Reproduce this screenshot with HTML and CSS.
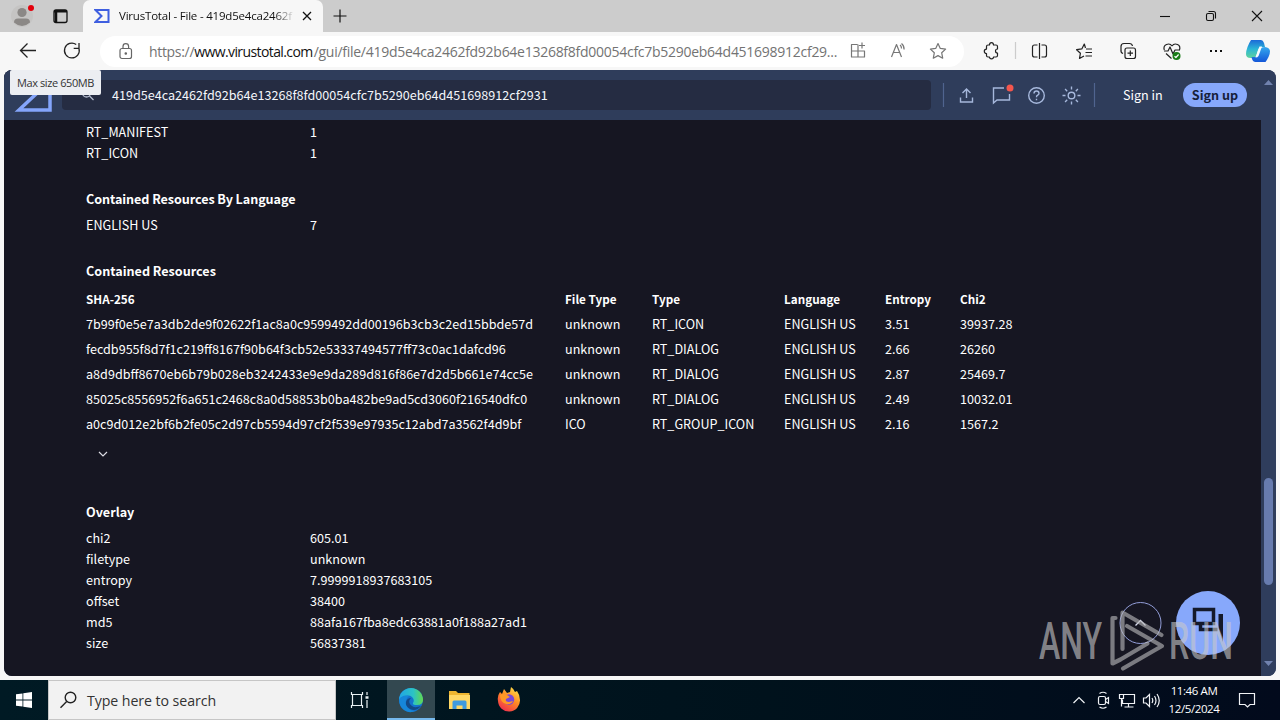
FILE: index.html
```html
<!DOCTYPE html>
<html lang="en">
<head>
<meta charset="utf-8">
<title>VirusTotal - File</title>
<link rel="stylesheet" href="styles.css">
</head>
<body>
<div class="screen">
  <div class="tabbar">
    <svg class="tab-left" width="83" height="32" viewBox="0 0 83 32">
      <circle cx="22" cy="16" r="11" fill="#c5c4c3"/>
      <circle cx="22" cy="12.5" r="4.6" fill="#8b8886"/>
      <path d="M14 22.500q0-4 4-4h8q4 0 4 4q-8 7-16 0z" fill="#8b8886"/>
      <circle cx="31" cy="8" r="3" fill="#e3000b"/>
      <rect x="54" y="10" width="13" height="12.500" rx="2" fill="none" stroke="#111" stroke-width="1.300"/>
      <path d="M54 11.200h13M56 12v10" stroke="#111" stroke-width="2.500"/>
    </svg>
    <div class="tab">
      <svg width="16" height="14" viewBox="0 0 16 14"><path d="M1.500 1h13v12h-13l6-6z" fill="none" stroke="#3f5fe0" stroke-width="2"/></svg>
      <span class="tab-title">VirusTotal - File - 419d5e4ca2462f</span>
      <svg width="10" height="10" viewBox="0 0 10 10"><path d="M1 1l8 8M9 1l-8 8" stroke="#111" stroke-width="1.300"/></svg>
    </div>
    <svg class="newtab" width="14" height="14" viewBox="0 0 14 14"><path d="M7 .5v13M.5 7h13" stroke="#111" stroke-width="1.200"/></svg>
    <svg class="winctl" width="110" height="32" viewBox="0 0 110 32" fill="none" stroke="#111" stroke-width="1.100">
      <path d="M9 16.500h10"/>
      <rect x="55.500" y="13.500" width="7" height="7" rx="1.500"/><path d="M57.500 11.500h5q2 0 2 2v5"/>
      <path d="M101 11l10 10M111 11l-10 10"/>
    </svg>
  </div>

  <div class="toolbar">
    <svg class="nav" width="100" height="38" viewBox="0 32 100 38" fill="none" stroke="#222" stroke-width="1.300">
      <path d="M36 50.500H20.500M27.500 43.500l-7 7 7 7"/>
      <path d="M79 48.500a7.400 7.400 0 1 1-2.800-4M79 43v5.300h-5.300"/>
    </svg>
    <div class="address">
      <svg class="lock" width="14" height="17" viewBox="0 0 14 17" fill="none" stroke="#666" stroke-width="1.200"><rect x="1" y="5.500" width="11.500" height="10" rx="2"/><path d="M4 5.500V3.500a2.800 2.800 0 0 1 5.600 0v2"/><circle cx="6.800" cy="10.500" r=".7" fill="#666"/></svg>
      <span class="url"><span class="u1">https://</span><span class="u2">www.virustotal.com</span><span class="u3">/gui/file/419d5e4ca2462fd92b64e13268f8fd00054cfc7b5290eb64d451698912cf29...</span></span>
    </div>
    <svg class="tools" width="436" height="38" viewBox="844 32 436 38" fill="none" stroke="#222" stroke-width="1.200" stroke-linejoin="round">
      <g stroke="#767676">
        <path d="M857.500 44.500h-6v12.500h13v-6h-13M858 44.500V57M862 42.500v6M859 45.500h6"/>
        <path d="M891.500 57l5-12.500 5 12.500M893.500 52.500h6.500M900 45q1.500 1 1.500 3.500M901.500 43.500q2.700 2 2.600 6"/>
        <path d="M938 43.500l2.300 4.900 5.300.7-3.900 3.700 1 5.400-4.700-2.600-4.700 2.600 1-5.400-3.900-3.700 5.300-.7z"/>
      </g>
      <path d="M986.500 46.500q0-1.500 1.500-1.500h1.500q0-2.300 2-2.300t2 2.300h2.500q1.500 0 1.500 1.500v2.500q-2 0-2 2t2 2v2.500q0 1.500-1.500 1.500h-2.500q0 1.800-2 1.800t-2-1.800h-1.500q-1.500 0-1.500-1.500v-2q-2.200 0-2.200-2.200t2.200-2.200z"/>
      <path d="M1015.500 42v17" stroke="#ccc"/>
      <path d="M1037.500 45h-3q-2 0-2 2v8q0 2 2 2h3M1041.500 45h3q2 0 2 2v8q0 2-2 2h-3M1039.500 43v16"/>
      <path d="M1085.500 48l-1.200-4-2.500 4.900-5.200.8 3.800 3.600-.9 5.100 4.500-2.500M1086 49h6M1085.500 52.500h6.500M1085.500 56h6.500"/>
      <rect x="1125" y="48" width="10.500" height="10.500" rx="2"/><path d="M1130.300 50.500v5.500M1127.500 53.200h5.500M1123 53.500q-2.500-1-2-4v-3q0-3 3-3h5.500q2.500 0 3 2.500"/>
      <path d="M1172 46q-2-3-5.500-1.500t-2.200 5.500M1172 46q2-3 5.500-1.500t1.800 6M1164 51h4l2-4 3 7 2-4h4M1166 53.500l5.500 5"/>
      <circle cx="1176.500" cy="56" r="4" fill="#187c16" stroke="none"/><path d="M1174.500 56.200l1.400 1.300 2.700-3" stroke="#fff"/>
      <path d="M1210 51h2M1215 51h2M1220 51h2" stroke="#111" stroke-width="2"/>
      <defs>
        <linearGradient id="cop1" x1="0" y1="0" x2="0" y2="1"><stop offset="0" stop-color="#1b69d8"/><stop offset=".5" stop-color="#2bb6d6"/><stop offset="1" stop-color="#5fd39c"/></linearGradient>
        <linearGradient id="cop2" x1="0" y1="0" x2="0" y2="1"><stop offset="0" stop-color="#35a8ee"/><stop offset="1" stop-color="#1457d8"/></linearGradient>
      </defs>
      <g stroke="none">
        <path d="M1251 40h10q2 0 3 3l1 4h-4q-2 0-3 3l-1.500 5q-1 3-4 3h-2q-4.500 0-4.500-4 0-3 1.500-7t3.500-7z" fill="url(#cop1)"/>
        <path d="M1265 47q4.500.5 5 4 0 3-1.500 6t-3 5h-10q-2.500 0-3.500-3l-.5-2h3q2.500 0 3.500-3l1.500-4q1-3 5.500-3z" fill="url(#cop2)"/>
        <path d="M1259.500 46.500h2.500l-3.500 9.500q-1 1.500-3 1.500z" fill="#f7fbff"/>
      </g>
    </svg>
  </div>

  <div class="viewport">
    <div class="page">
      <header class="vthead">
        <svg class="vtlogo" width="44" height="50" viewBox="10 70 44 50"><path d="M18 78h32v32H19l16-15z" fill="none" stroke="#84a5fb" stroke-width="3.500"/></svg>
        <div class="search">
          <svg width="14" height="14" viewBox="0 0 14 14" fill="none" stroke="#b5bdd0" stroke-width="1.300"><circle cx="4.500" cy="5" r="4"/><path d="M7.500 8l4 4"/></svg>
          <span class="query">419d5e4ca2462fd92b64e13268f8fd00054cfc7b5290eb64d451698912cf2931</span>
        </div>
        <svg class="headicons" width="166" height="50" viewBox="940 70 166 50" fill="none" stroke="#a6b8dc" stroke-width="1.400">
          <path d="M943.500 83v24M1094.500 83v24" stroke="#50648f" stroke-width="1.200"/>
          <path d="M966.500 98v-8.500M962.500 93l4-4 4 4M960.500 97.500v4.500h12v-4.500"/>
          <path d="M1004 88h-10.500v15l3.500-3h12.500V94"/>
          <circle cx="1010" cy="88" r="3.500" fill="#f4564d" stroke="none"/>
          <circle cx="1036.500" cy="95.500" r="7.800"/><path d="M1034 93.500q0-2.500 2.500-2.500t2.500 2.200q0 1.300-1.300 2t-1.200 2M1036.500 98.700v1.500"/>
          <circle cx="1071.500" cy="95.500" r="3.300"/>
          <path d="M1071.500 86.500v3M1071.500 101.500v3M1062.500 95.500h3M1077.500 95.500h3M1065.100 89.100l2.100 2.100M1075.800 99.800l2.100 2.100M1077.900 89.100l-2.100 2.100M1067.200 99.800l-2.100 2.100"/>
        </svg>
        <span class="signin">Sign in</span>
        <span class="signup">Sign up</span>
      </header>

      <main class="details">
        <div class="pair"><span>RT_MANIFEST</span><span>1</span></div>
        <div class="pair"><span>RT_ICON</span><span>1</span></div>
        <h2 class="tight">Contained Resources By Language</h2>
        <div class="pair"><span>ENGLISH US</span><span>7</span></div>
        <h2>Contained Resources</h2>
        <div class="res rhead"><span>SHA-256</span><span>File Type</span><span>Type</span><span>Language</span><span>Entropy</span><span>Chi2</span></div>
        <div class="res"><span>7b99f0e5e7a3db2de9f02622f1ac8a0c9599492dd00196b3cb3c2ed15bbde57d</span><span>unknown</span><span>RT_ICON</span><span>ENGLISH US</span><span>3.51</span><span>39937.28</span></div>
        <div class="res"><span>fecdb955f8d7f1c219ff8167f90b64f3cb52e53337494577ff73c0ac1dafcd96</span><span>unknown</span><span>RT_DIALOG</span><span>ENGLISH US</span><span>2.66</span><span>26260</span></div>
        <div class="res"><span>a8d9dbff8670eb6b79b028eb3242433e9e9da289d816f86e7d2d5b661e74cc5e</span><span>unknown</span><span>RT_DIALOG</span><span>ENGLISH US</span><span>2.87</span><span>25469.7</span></div>
        <div class="res"><span>85025c8556952f6a651c2468c8a0d58853b0ba482be9ad5cd3060f216540dfc0</span><span>unknown</span><span>RT_DIALOG</span><span>ENGLISH US</span><span>2.49</span><span>10032.01</span></div>
        <div class="res"><span>a0c9d012e2bf6b2fe05c2d97cb5594d97cf2f539e97935c12abd7a3562f4d9bf</span><span>ICO</span><span>RT_GROUP_ICON</span><span>ENGLISH US</span><span>2.16</span><span>1567.2</span></div>
        <div class="more"><svg width="10" height="6" viewBox="0 0 10 6"><path d="M1 1l4 4 4-4" fill="none" stroke="#dcdce4" stroke-width="1.200"/></svg></div>
        <h2>Overlay</h2>
        <div class="pair"><span>chi2</span><span>605.01</span></div>
        <div class="pair"><span>filetype</span><span>unknown</span></div>
        <div class="pair"><span>entropy</span><span>7.9999918937683105</span></div>
        <div class="pair"><span>offset</span><span>38400</span></div>
        <div class="pair"><span>md5</span><span>88afa167fba8edc63881a0f188a27ad1</span></div>
        <div class="pair"><span>size</span><span>56837381</span></div>
      </main>
    </div>
    <svg class="scroll" width="15" height="606" viewBox="0 0 15 606"><path d="M3 15l4.500-5 4.500 5zM3 591l4.500 5 4.500-5z" fill="#7182ae"/><rect x="3" y="408" width="9" height="107" rx="4.500" fill="#677bae"/></svg>
  </div>

  <div class="tooltip">Max size 650MB</div>

  <svg class="overlay" width="220" height="90" viewBox="1030 586 220 90">
    <circle cx="1140.500" cy="623" r="20.500" fill="none" stroke="#929dd8" stroke-width="1"/>
    <path d="M1135.500 625.500l5-5 5 5" fill="none" stroke="#d8dcef" stroke-width="1.300"/>
    <circle cx="1208" cy="623" r="32" fill="#87a8fb"/>
    <path d="M1194.500 609.500h19v14h-19zM1200.500 624v5.500h17" fill="none" stroke="#151a2b" stroke-width="3.500"/>
    <path d="M1218.500 614h4.500v28l-4.500-14z" fill="#151a2b"/>
    <g fill="none" stroke="#b9b9bc" stroke-opacity=".62" stroke-width="4.200" stroke-linejoin="round" stroke-linecap="round">
      <path d="M1115.500 618h-3v45.500l8-4 27-16M1122.500 649v-36.500l39 22.500M1127 626l35 20-39 22.500"/>
    </g>
    <g class="mark">
      <text x="1039" y="659" textLength="63" lengthAdjust="spacingAndGlyphs">ANY</text>
      <text x="1169" y="659" textLength="64" lengthAdjust="spacingAndGlyphs">RUN</text>
    </g>
  </svg>

  <footer class="taskbar">
    <div class="start"><svg width="16" height="16" viewBox="0 0 16 16" fill="#fff"><path d="M0 2.300L6.500 1.400V7.600H0zM7.300 1.300L16 0v7.600H7.300zM0 8.400h6.500v6.200L0 13.700zM7.300 8.400H16V16l-8.700-1.300z"/></svg></div>
    <div class="tsearch">
      <svg width="18" height="18" viewBox="0 0 18 18" fill="none" stroke="#222" stroke-width="1.400"><circle cx="10.500" cy="6.500" r="5.300"/><path d="M6.700 10.500L.5 16.700"/></svg>
      <span>Type here to search</span>
    </div>
    <svg class="apps" width="196" height="40" viewBox="336 680 196 40">
      <g fill="none" stroke="#e8f0f2" stroke-width="1.200"><path d="M351.500 692v2.500h11V692M351.500 708v-2.500h11v2.500M352.500 694v12M361.500 694v12M367 692v3M367 700v8"/><path d="M365.500 697.500h3" stroke-width="2.500"/></g>
      <rect x="387" y="680" width="48" height="40" fill="#334850"/><rect x="387" y="718" width="48" height="2" fill="#76b9ed"/>
      <defs>
        <linearGradient id="e1" x1="0" x2="1"><stop offset="0" stop-color="#20a5e6"/><stop offset=".6" stop-color="#2cc3c4"/><stop offset="1" stop-color="#62d84f"/></linearGradient>
        <linearGradient id="f1" x1=".8" y1="0" x2=".2" y2="1"><stop offset="0" stop-color="#ffe34a"/><stop offset=".45" stop-color="#ff8c24"/><stop offset="1" stop-color="#ee2850"/></linearGradient>
      </defs>
      <circle cx="411" cy="700" r="12" fill="#1472cd"/>
      <path d="M399 700a12 12 0 0 1 24 0q0 5-6 5-5 0-4-2 2-3-1-6-5-4-13 3z" fill="url(#e1)"/>
      <path d="M399 699q4-5 10-3-4 3-3 8 2 7 9 7-4 2-8 .5-8-3-8-12.500z" fill="#1686d9"/>
      <path d="M411 698q-3 3-1 6 3 5 11 2-5 6-11 3-5-3-4-7 1-4 5-4z" fill="#134986"/>
      <path d="M449 691h7l2 2h11.500v16H449z" fill="#eeb530"/><path d="M449 695h21v14h-21z" fill="#ffd765"/><path d="M452.500 709v-7q0-1.500 1.500-1.500h11q1.500 0 1.500 1.500v7h-4v-3.500h-6v3.500z" fill="#3f9ade"/>
      <path d="M500 692l2 2 2-5 3 4 3-1 1-5q3 2 4 5l2-1q3 4 3 9a11 11 0 0 1-22 1q-1-5 2-9z" fill="url(#f1)"/>
      <circle cx="509" cy="699.500" r="5.200" fill="#7948d8"/><path d="M500 695q3-2 7 0l3 2-4 2q-1 3 3 3l4-1q-2 4-7 3-6-2-6-9z" fill="#ff9a25"/>
    </svg>
    <svg class="tray" width="92" height="40" viewBox="1070 680 92 40" fill="none" stroke="#f0f2f5" stroke-width="1.200">
      <path d="M1073.500 703l5.500-5.500 5.500 5.500"/>
      <rect x="1098.500" y="696.500" width="7" height="8" rx="1.500"/><path d="M1105.500 699.500l3-2v6l-3-2M1099.500 693.500q3.500-2.500 7 0M1099.500 707q3.500 2.500 7 0"/>
      <path d="M1124 694.500h10.500v9h-12v-4M1128.500 703.500v3.500M1124.500 707h9M1119.500 694.500h4v4h-4zM1121.500 698.500v8"/>
      <path d="M1143.500 698h2.500l3.500-3.500v12l-3.500-3.500h-2.500zM1152 698q1.500 2.500 0 5M1154.500 696q3 4.500 0 9M1157 694q4.500 6.500 0 13"/>
    </svg>
    <div class="clock"><span>11:46 AM</span><span>12/5/2024</span></div>
    <svg class="notif" width="18" height="18" viewBox="0 0 18 18"><path d="M1.500 2.500h15v11h-4.500L9.500 16 7 13.500H1.500z" fill="none" stroke="#f0f2f5" stroke-width="1.200"/></svg>
  </footer>
</div>
</body>
</html>
```
FILE: styles.css
```css
* { box-sizing: border-box; }
body { margin: 0; font-family: "Open Sans", "Noto Sans", sans-serif; }
svg { display: block; flex: none; }
.screen { position: relative; width: 1280px; height: 720px; overflow: hidden; background: #f7f7f7; display: flex; flex-direction: column; }

.tabbar { height: 32px; flex: none; background: #cccccc; display: flex; align-items: center; }
.tab { width: 240px; height: 32px; background: #f7f7f7; border-radius: 7px 7px 0 0; display: flex; align-items: center; padding-left: 11px; }
.tab-title { margin: -2px 9px 0; width: 176px; font-size: 11.5px; letter-spacing: -0.2px; color: #111; white-space: nowrap; -webkit-mask-image: linear-gradient(90deg, #000 155px, transparent 176px); mask-image: linear-gradient(90deg, #000 155px, transparent 176px); }
.tab > svg:last-child { margin-left: -2px; }
.newtab { margin-left: 10px; }
.winctl { margin-left: auto; margin-right: 19px; overflow: visible; }

.toolbar { height: 38px; flex: none; display: flex; align-items: center; }
.address { width: 864px; height: 31px; border-radius: 16px; background: #fff; display: flex; align-items: center; padding-left: 19px; margin-right: -120px; }
.lock { margin-right: 16px; }
.url { font-size: 14px; color: #737373; white-space: nowrap; width: 690px; }
.u1 { letter-spacing: -0.32px; }
.u2 { color: #111; letter-spacing: -0.6px; margin-right: 1px; }
.u3 { letter-spacing: -0.27px; }

.viewport { width: 1272px; height: 606px; margin-left: 4px; flex: none; border-radius: 8px; overflow: hidden; background: #2f3d5c; display: flex; }
.page { width: 1257px; background: #161622; }
.scroll { background: #2f3d5c; }
.vthead { height: 50px; background: #2f3d5b; display: flex; align-items: center; font-family: "Noto Sans CJK JP", sans-serif; padding-left: 6px; }
.search { width: 869px; height: 30px; margin-left: 8px; background: #252c42; border-radius: 4px; display: flex; align-items: center; padding-left: 20px; color: #f4f6fb; }
.query { margin-left: 16px; font-size: 12.6px; line-height: 20px; }
.headicons { margin-left: 9px; }
.signin { margin-left: 17px; font-size: 12.6px; line-height: 20px; color: #fff; width: 60px; }
.signup { width: 64px; height: 24px; line-height: 24px; border-radius: 12px; background: #87a8fb; color: #16203a; font-weight: 700; font-size: 12.6px; text-align: center; }

.details { padding: 2px 0 0 82px; color: #fff; font-family: "Noto Sans CJK JP", sans-serif; font-size: 12.6px; }
.details span { white-space: nowrap; }
.pair { display: grid; grid-template-columns: 224px 1fr; line-height: 19px; height: 21px; }
.details h2 { margin: 25px 0 6px; font-size: 12.6px; line-height: 20px; height: 20px; font-weight: 700; }
.details .tight { letter-spacing: -0.07px; }
.res { display: grid; grid-template-columns: 479px 87px 132px 101px 75px 1fr; height: 25px; line-height: 23px; }
.rhead { font-weight: 700; font-size: 11.7px; }
.more { height: 40px; padding: 14px 0 0 12px; }

.tooltip { position: absolute; left: 10px; top: 70px; width: 91px; height: 25px; line-height: 26px; background: #eceef2; border-radius: 2px; font-size: 11px; letter-spacing: -0.4px; color: #333; text-align: center; white-space: nowrap; }
.overlay { position: absolute; left: 1030px; top: 586px; }
.mark { font-family: Roboto, sans-serif; font-weight: 500; font-size: 52px; fill: #c9c9ca; fill-opacity: .62; }

.taskbar { margin-top: 4px; height: 40px; flex: none; background: linear-gradient(90deg, #001a24, #00121c 60%, #020a1c); display: flex; align-items: center; color: #fff; }
.start { width: 48px; padding-left: 16px; }
.tsearch { width: 288px; height: 40px; background: #f2f2f2; border: 1px solid #c6c6c6; display: flex; align-items: center; padding-left: 11px; color: #333; }
.tsearch span { margin-left: 9px; font-size: 14.2px; letter-spacing: -0.08px; white-space: nowrap; }
.tray { margin-left: 538px; }
.clock { width: 66px; display: flex; flex-direction: column; align-items: center; font-size: 11.5px; line-height: 18px; letter-spacing: -0.4px; white-space: nowrap; margin-left: -1px; margin-right: 1px; }
.notif { margin-left: 10px; }
```
